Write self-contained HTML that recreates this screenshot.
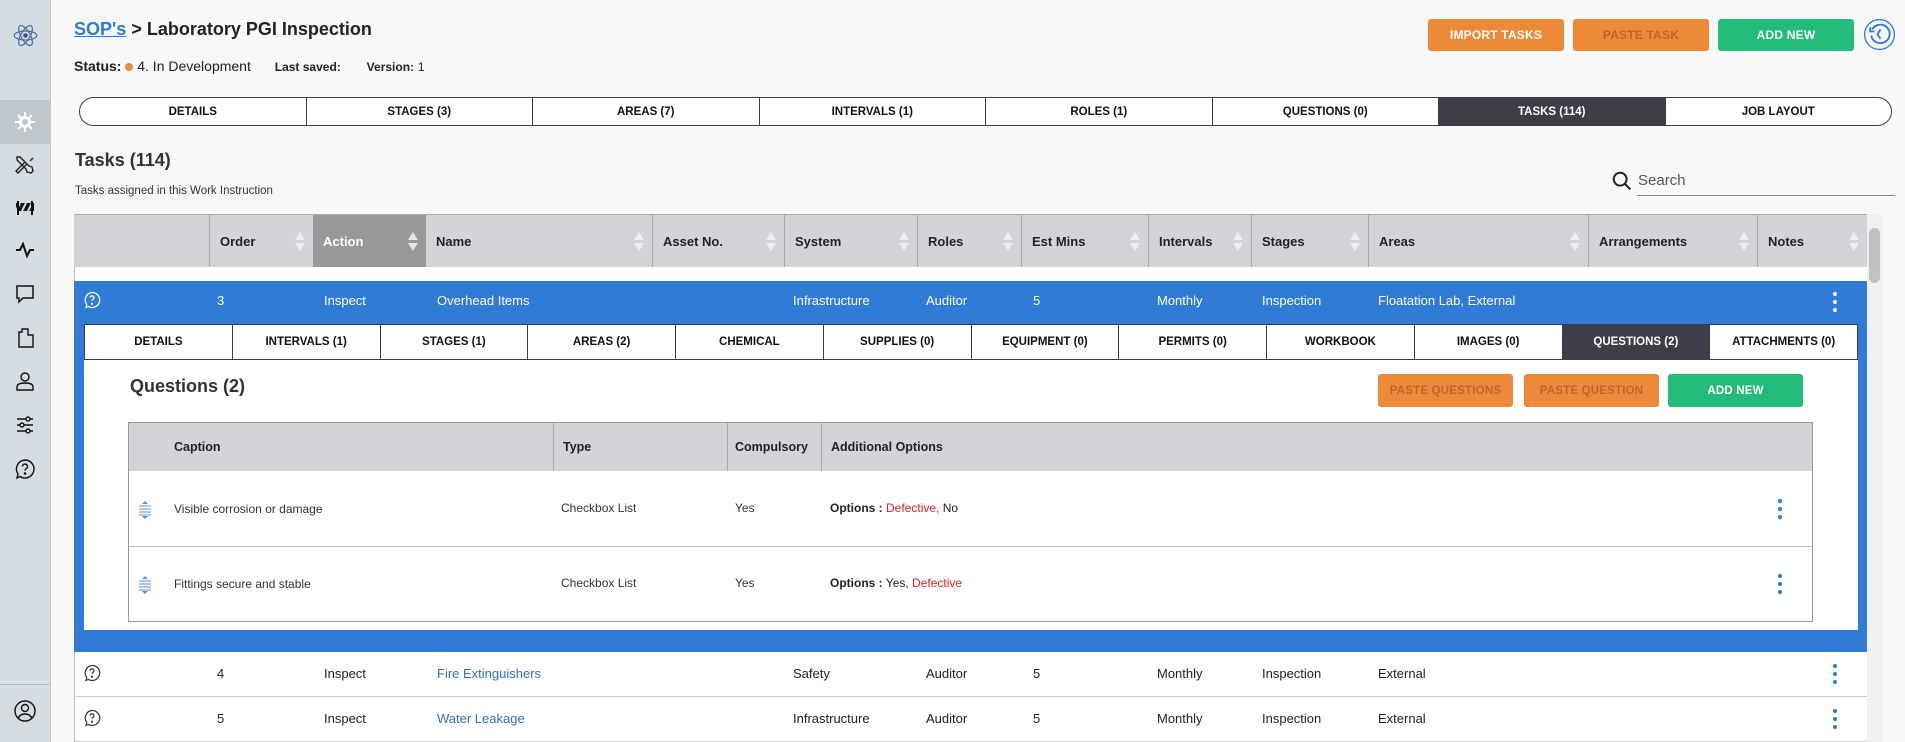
<!DOCTYPE html>
<html><head><meta charset="utf-8"><style>
*{box-sizing:border-box;margin:0;padding:0}
body{width:1905px;height:742px;overflow:hidden;background:#f8f8f8;font-family:"Liberation Sans",Arial,sans-serif;color:#222;position:relative}
.a{position:absolute}
.sb{left:0;top:0;width:51px;height:742px;background:#d5dde2;border-right:1px solid #c3c9cd}
.ic{position:absolute;left:13px;width:24px;height:24px}
.btn{position:absolute;height:32px;border-radius:3px;font-size:12px;font-weight:bold;display:flex;align-items:center;justify-content:center;letter-spacing:.2px}
.or{background:#ec8a3a;color:#fff}
.or.dim{color:#c0622a}
.gr{background:#22bb7a;color:#fff}
.tabs{display:flex;border:1.5px solid #3d3e47;background:#fff}
.tabs div{flex:1;display:flex;align-items:center;justify-content:center;font-size:11.5px;font-weight:bold;border-left:1px solid #3d3e47;color:#111}
.tabs div:first-child{border-left:none}
.tabs div.on{background:#3d3e47;color:#fff}
.th{position:absolute;top:215px;height:52px;background:#d3d4d9;border-left:1px solid #aaa;font-size:13px;font-weight:bold;display:flex;align-items:center;padding-left:10px}
.srt{position:absolute;right:8px;top:17px;width:10px;height:19px}
.srt:before{content:"";position:absolute;left:0;top:0;border:5px solid transparent;border-bottom:8px solid #eceef1;border-top:0}
.srt:after{content:"";position:absolute;left:0;bottom:0;border:5px solid transparent;border-top:8px solid #eceef1;border-bottom:0}
.t{position:absolute;font-size:13px;white-space:nowrap}
.keb{position:absolute;width:4px;height:20px}
.keb i{display:block;width:4px;height:4px;border-radius:2px;margin-bottom:4px}
.qh{position:absolute;top:423px;height:48px;background:#d3d4d9;font-size:12.5px;font-weight:bold;display:flex;align-items:center;border-left:1px solid #aaa}
.s12{font-size:12px}
</style></head><body>

<div class="a sb">
 <svg class="ic" style="top:22px;left:12px;width:27px;height:27px" viewBox="0 0 24 24" fill="none" stroke="#4a6fa5" stroke-width="1.1"><ellipse cx="12" cy="12" rx="10" ry="4"/><ellipse cx="12" cy="12" rx="10" ry="4" transform="rotate(60 12 12)"/><ellipse cx="12" cy="12" rx="10" ry="4" transform="rotate(120 12 12)"/><circle cx="12" cy="12" r="1.6" fill="#1d3a7a"/></svg>
 <div class="a" style="left:0;top:100px;width:51px;height:44px;background:#bfc7cc"></div>
 <svg class="ic" style="top:110px" viewBox="0 0 24 24"><g stroke="#fff" stroke-width="2"><path d="M12 2v20M2 12h20M5 5l14 14M19 5L5 19"/></g><circle cx="12" cy="12" r="6" fill="#fff"/><circle cx="12" cy="12" r="3" fill="#bfc7cc"/></svg>
 <svg class="ic" style="top:153px" viewBox="0 0 24 24" fill="none" stroke="#222" stroke-width="1.4"><path d="M4 4l3 0 9 9 3 1 1 4-2 2-4-1-1-3-9-9z"/><path d="M20 5l-3 3M14 11l-9 9-2-2 9-9"/></svg>
 <svg class="ic" style="top:196px" viewBox="0 0 24 24"><rect x="3" y="7" width="18" height="8" fill="#111"/><path d="M7 7l-4 8M13 7l-4 8M19 7l-4 8" stroke="#d5dde2" stroke-width="2"/><path d="M5 5v14M19 5v14" stroke="#111" stroke-width="2"/></svg>
 <svg class="ic" style="top:238px" viewBox="0 0 24 24" fill="none" stroke="#111" stroke-width="2"><path d="M3 12h4l3-6 4 12 3-6h4"/></svg>
 <svg class="ic" style="top:282px" viewBox="0 0 24 24" fill="none" stroke="#111" stroke-width="1.5"><path d="M4 4h16v12H10l-4 4v-4H4z"/></svg>
 <svg class="ic" style="top:326px" viewBox="0 0 24 24" fill="none" stroke="#111" stroke-width="1.4"><path d="M6 6h3V3h6v6h5v12H6z"/></svg>
 <svg class="ic" style="top:369px" viewBox="0 0 24 24" fill="none" stroke="#111" stroke-width="1.4"><circle cx="12" cy="8" r="4"/><path d="M4 21v-3c0-3 3-4 8-4s8 1 8 4v3z"/></svg>
 <svg class="ic" style="top:413px" viewBox="0 0 24 24" fill="none" stroke="#111" stroke-width="1.4"><path d="M4 6h16M4 12h16M4 18h16"/><circle cx="15" cy="6" r="2" fill="#d5dde2"/><circle cx="9" cy="12" r="2" fill="#d5dde2"/><circle cx="15" cy="18" r="2" fill="#d5dde2"/></svg>
 <svg class="ic" style="top:457px" viewBox="0 0 24 24" fill="none" stroke="#111" stroke-width="1.4"><path d="M12 3a9 9 0 1 1-5 16.5L4 21l1-4A9 9 0 0 1 12 3z"/><path d="M9.5 9.5a2.5 2.5 0 1 1 3.5 2.3c-.7.4-1 .9-1 1.7"/><circle cx="12" cy="16.5" r=".6" fill="#111"/></svg>
 <div class="a" style="left:0;top:684px;width:51px;height:1px;background:#b5bcc0"></div>
 <svg class="ic" style="top:699px" viewBox="0 0 24 24" fill="none" stroke="#111" stroke-width="1.4"><circle cx="12" cy="12" r="10"/><circle cx="12" cy="9" r="3.5"/><path d="M5.5 19c1-3 3.5-4 6.5-4s5.5 1 6.5 4"/></svg>
</div>

<div class="a" style="left:74px;top:19px;font-size:18px;font-weight:bold;white-space:nowrap"><span style="color:#2f7bd6;text-decoration:underline">SOP's</span> &gt; Laboratory PGI Inspection</div>
<div class="a" style="left:74px;top:58px;font-size:14px;white-space:nowrap"><b>Status:</b> <span style="display:inline-block;width:8px;height:8px;border-radius:4px;background:#ec8a3a"></span> 4. In Development <span style="margin-left:20px;font-size:12px;font-weight:bold">Last saved:</span> <span style="margin-left:22px;font-size:12px;font-weight:bold">Version:</span> <span style="font-size:12px">1</span></div>

<div class="btn or" style="left:1428px;top:19px;width:136px">IMPORT TASKS</div>
<div class="btn or dim" style="left:1573px;top:19px;width:136px">PASTE TASK</div>
<div class="btn gr" style="left:1718px;top:19px;width:136px">ADD NEW</div>
<svg class="a" style="left:1863px;top:18px;width:33px;height:33px" viewBox="0 0 32 32" fill="none" stroke="#2f7bd6" stroke-width="1.8"><circle cx="16" cy="16" r="14.5" stroke-width="1.3"/><path d="M9 11a9 9 0 1 1-1 6"/><path d="M7 9v4h4"/><path d="M17 11l-3 5 3 4"/></svg>

<div class="a tabs" style="left:79px;top:97px;width:1813px;height:29px;border-radius:15px;overflow:hidden">
<div>DETAILS</div><div>STAGES (3)</div><div>AREAS (7)</div><div>INTERVALS (1)</div><div>ROLES (1)</div><div>QUESTIONS (0)</div><div class="on">TASKS (114)</div><div>JOB LAYOUT</div></div>

<div class="a" style="left:75px;top:150px;font-size:18px;font-weight:bold;color:#333">Tasks (114)</div>
<div class="a" style="left:75px;top:185px;font-size:11.5px;color:#333">Tasks assigned in this Work Instruction</div>
<svg class="a" style="left:1611px;top:170px;width:22px;height:22px" viewBox="0 0 24 24" fill="none" stroke="#222" stroke-width="2.2"><circle cx="10" cy="10" r="7"/><path d="M15 15l6 6"/></svg>
<div class="a" style="left:1638px;top:172px;font-size:15px;color:#555">Search</div>
<div class="a" style="left:1637px;top:195px;width:258px;height:1px;background:#888"></div>

<!-- main table -->
<div class="a" style="left:74px;top:214px;width:1793px;height:528px;background:#fff;border-left:1px solid #bbb;border-top:1px solid #aaa"></div>
<div class="a" style="left:1867px;top:214px;width:15px;height:528px;background:#f0f0f0"></div>
<div class="a" style="left:1869px;top:228px;width:11px;height:55px;border-radius:6px;background:#c1c1c1"></div>
<div class="th" style="left:74px;width:135px;border-left:none"></div>
<div class="th" style="left:209px;width:104px">Order<span class="srt"></span></div>
<div class="th" style="left:313px;width:113px;background:#999;color:#fff;border-left:none">Action<span class="srt" style="opacity:.9"></span></div>
<div class="th" style="left:426px;width:226px;border-left:none">Name<span class="srt"></span></div>
<div class="th" style="left:652px;width:132px">Asset No.<span class="srt"></span></div>
<div class="th" style="left:784px;width:133px">System<span class="srt"></span></div>
<div class="th" style="left:917px;width:104px">Roles<span class="srt"></span></div>
<div class="th" style="left:1021px;width:127px">Est Mins<span class="srt"></span></div>
<div class="th" style="left:1148px;width:103px">Intervals<span class="srt"></span></div>
<div class="th" style="left:1251px;width:117px">Stages<span class="srt"></span></div>
<div class="th" style="left:1368px;width:220px">Areas<span class="srt"></span></div>
<div class="th" style="left:1588px;width:169px">Arrangements<span class="srt"></span></div>
<div class="th" style="left:1757px;width:110px">Notes<span class="srt"></span></div>

<!-- expanded blue -->
<div class="a" style="left:74px;top:281px;width:1793px;height:371px;background:#2f7bd6"></div>
<svg class="a" style="left:83px;top:291px;width:18px;height:18px" viewBox="0 0 24 24" fill="none" stroke="#fff" stroke-width="1.6"><path d="M12 2a10 10 0 1 1-5 18.5L4 22l1-4A10 10 0 0 1 12 2z"/><path d="M9.5 9a2.5 2.5 0 1 1 3.5 2.3c-.7.4-1 .9-1 1.7"/><circle cx="12" cy="17" r=".7" fill="#fff"/></svg>
<div style="color:#fff">
<div class="t" style="left:217px;top:293px">3</div>
<div class="t" style="left:324px;top:293px">Inspect</div>
<div class="t" style="left:437px;top:293px">Overhead Items</div>
<div class="t" style="left:793px;top:293px">Infrastructure</div>
<div class="t" style="left:926px;top:293px">Auditor</div>
<div class="t" style="left:1033px;top:293px">5</div>
<div class="t" style="left:1157px;top:293px">Monthly</div>
<div class="t" style="left:1262px;top:293px">Inspection</div>
<div class="t" style="left:1378px;top:293px">Floatation Lab, External</div>
</div>
<div class="keb" style="left:1833px;top:292px"><i style="background:#fff"></i><i style="background:#fff"></i><i style="background:#fff"></i></div>

<div class="a" style="left:84px;top:324px;width:1774px;height:306px;background:#fff"></div>
<div class="a tabs" style="left:84px;top:324px;width:1774px;height:36px">
<div>DETAILS</div><div>INTERVALS (1)</div><div>STAGES (1)</div><div>AREAS (2)</div><div>CHEMICAL</div><div>SUPPLIES (0)</div><div>EQUIPMENT (0)</div><div>PERMITS (0)</div><div>WORKBOOK</div><div>IMAGES (0)</div><div class="on">QUESTIONS (2)</div><div>ATTACHMENTS (0)</div></div>

<div class="a" style="left:130px;top:376px;font-size:18px;font-weight:bold;color:#333">Questions (2)</div>
<div class="btn or dim" style="left:1378px;top:374px;width:135px;height:33px;font-size:11.5px">PASTE QUESTIONS</div>
<div class="btn or dim" style="left:1524px;top:374px;width:135px;height:33px;font-size:11.5px">PASTE QUESTION</div>
<div class="btn gr" style="left:1668px;top:374px;width:135px;height:33px;font-size:11.5px">ADD NEW</div>

<div class="a" style="left:128px;top:422px;width:1685px;height:200px;border:1.5px solid #999;background:#fff"></div>
<div class="qh" style="left:129px;width:424px;border-left:none;padding-left:45px">Caption</div>
<div class="qh" style="left:553px;width:174px;padding-left:9px">Type</div>
<div class="qh" style="left:727px;width:94px;padding-left:7px">Compulsory</div>
<div class="qh" style="left:821px;width:991px;padding-left:9px">Additional Options</div>
<div class="a" style="left:129px;top:546px;width:1683px;height:1px;background:#bbb"></div>

<svg class="a" style="left:138px;top:501px;width:14px;height:18px" viewBox="0 0 14 18"><path d="M7 0l3 3H4zM7 18l3-3H4z" fill="#5b8fd8"/><path d="M1 5h12M1 8h12M1 11h12M1 14h12" stroke="#8fb2e6" stroke-width="1.4"/></svg>
<div class="t s12" style="left:174px;top:502px;color:#333">Visible corrosion or damage</div>
<div class="t s12" style="left:561px;top:501px;color:#333">Checkbox List</div>
<div class="t s12" style="left:735px;top:501px;color:#333">Yes</div>
<div class="t s12" style="left:830px;top:501px"><b>Options :</b> <span style="color:#d22">Defective,</span> No</div>
<div class="keb" style="left:1778px;top:499px"><i style="background:#2f7bd6"></i><i style="background:#2f7bd6"></i><i style="background:#2f7bd6"></i></div>

<svg class="a" style="left:138px;top:576px;width:14px;height:18px" viewBox="0 0 14 18"><path d="M7 0l3 3H4zM7 18l3-3H4z" fill="#5b8fd8"/><path d="M1 5h12M1 8h12M1 11h12M1 14h12" stroke="#8fb2e6" stroke-width="1.4"/></svg>
<div class="t s12" style="left:174px;top:577px;color:#333">Fittings secure and stable</div>
<div class="t s12" style="left:561px;top:576px;color:#333">Checkbox List</div>
<div class="t s12" style="left:735px;top:576px;color:#333">Yes</div>
<div class="t s12" style="left:830px;top:576px"><b>Options :</b> Yes, <span style="color:#d22">Defective</span></div>
<div class="keb" style="left:1778px;top:574px"><i style="background:#2f7bd6"></i><i style="background:#2f7bd6"></i><i style="background:#2f7bd6"></i></div>

<!-- rows 4,5 -->
<div class="a" style="left:74px;top:696px;width:1793px;height:1px;background:#ccc"></div>
<div class="a" style="left:74px;top:741px;width:1793px;height:1px;background:#ccc"></div>
<svg class="a" style="left:83px;top:664px;width:18px;height:18px" viewBox="0 0 24 24" fill="none" stroke="#333" stroke-width="1.6"><path d="M12 2a10 10 0 1 1-5 18.5L4 22l1-4A10 10 0 0 1 12 2z"/><path d="M9.5 9a2.5 2.5 0 1 1 3.5 2.3c-.7.4-1 .9-1 1.7"/><circle cx="12" cy="17" r=".7" fill="#333"/></svg>
<svg class="a" style="left:83px;top:709px;width:18px;height:18px" viewBox="0 0 24 24" fill="none" stroke="#333" stroke-width="1.6"><path d="M12 2a10 10 0 1 1-5 18.5L4 22l1-4A10 10 0 0 1 12 2z"/><path d="M9.5 9a2.5 2.5 0 1 1 3.5 2.3c-.7.4-1 .9-1 1.7"/><circle cx="12" cy="17" r=".7" fill="#333"/></svg>
<div style="color:#222">
<div class="t" style="left:217px;top:666px">4</div>
<div class="t" style="left:324px;top:666px">Inspect</div>
<div class="t" style="left:437px;top:666px;color:#2f6fc6">Fire Extinguishers</div>
<div class="t" style="left:793px;top:666px">Safety</div>
<div class="t" style="left:926px;top:666px">Auditor</div>
<div class="t" style="left:1033px;top:666px">5</div>
<div class="t" style="left:1157px;top:666px">Monthly</div>
<div class="t" style="left:1262px;top:666px">Inspection</div>
<div class="t" style="left:1378px;top:666px">External</div>
<div class="t" style="left:217px;top:711px">5</div>
<div class="t" style="left:324px;top:711px">Inspect</div>
<div class="t" style="left:437px;top:711px;color:#2f6fc6">Water Leakage</div>
<div class="t" style="left:793px;top:711px">Infrastructure</div>
<div class="t" style="left:926px;top:711px">Auditor</div>
<div class="t" style="left:1033px;top:711px">5</div>
<div class="t" style="left:1157px;top:711px">Monthly</div>
<div class="t" style="left:1262px;top:711px">Inspection</div>
<div class="t" style="left:1378px;top:711px">External</div>
</div>
<div class="keb" style="left:1833px;top:664px"><i style="background:#2f7bd6"></i><i style="background:#2f7bd6"></i><i style="background:#2f7bd6"></i></div>
<div class="keb" style="left:1833px;top:709px"><i style="background:#2f7bd6"></i><i style="background:#2f7bd6"></i><i style="background:#2f7bd6"></i></div>
</body></html>
